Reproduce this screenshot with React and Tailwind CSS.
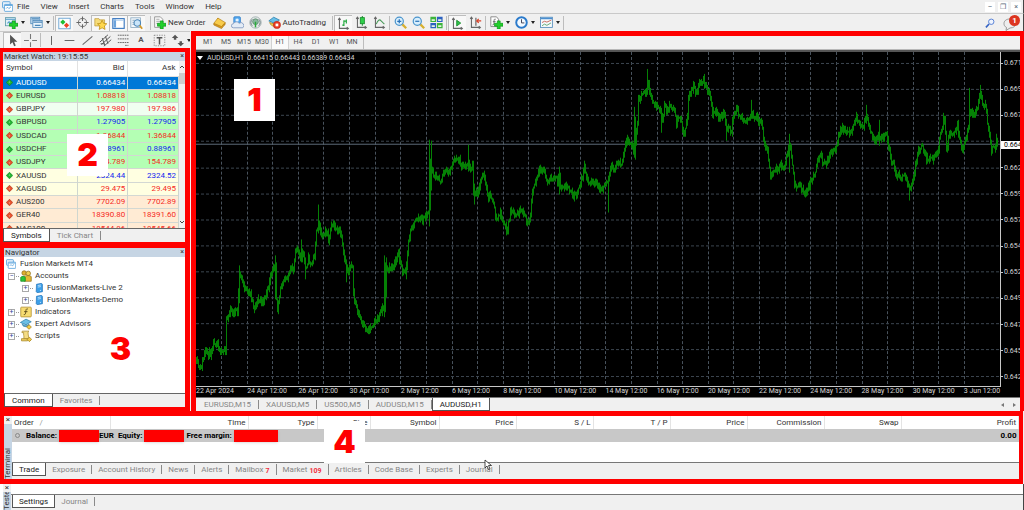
import clsx from 'clsx'

const QUOTES = [
  { symbol: 'AUDUSD', bid: '0.66434', ask: '0.66434', dir: 'up', tone: 'selected' },
  { symbol: 'EURUSD', bid: '1.08818', ask: '1.08818', dir: 'down', tone: 'green' },
  { symbol: 'GBPJPY', bid: '197.980', ask: '197.986', dir: 'down', tone: 'mint' },
  { symbol: 'GBPUSD', bid: '1.27905', ask: '1.27905', dir: 'up', tone: 'green' },
  { symbol: 'USDCAD', bid: '1.36844', ask: '1.36844', dir: 'down', tone: 'green' },
  { symbol: 'USDCHF', bid: '0.88961', ask: '0.88961', dir: 'up', tone: 'green' },
  { symbol: 'USDJPY', bid: '154.789', ask: '154.789', dir: 'down', tone: 'green' },
  { symbol: 'XAUUSD', bid: '2324.44', ask: '2324.52', dir: 'up', tone: 'yellow' },
  { symbol: 'XAGUSD', bid: '29.475', ask: '29.495', dir: 'down', tone: 'yellow' },
  { symbol: 'AUS200', bid: '7702.09', ask: '7702.89', dir: 'down', tone: 'orange' },
  { symbol: 'GER40', bid: '18390.80', ask: '18391.60', dir: 'down', tone: 'orange' },
  { symbol: 'NAS100', bid: '18544.86', ask: '18545.66', dir: 'down', tone: 'orange' },
]

const TONES = {
  selected: 'bg-[#0078d7]',
  green: 'bg-[#b4ffb4]',
  mint: 'bg-[#f0fff0]',
  yellow: 'bg-[#ffffe1]',
  orange: 'bg-[#ffebd4]',
}

const DATES = [
  '22 Apr 2024', '24 Apr 12:00', '26 Apr 12:00', '30 Apr 12:00', '2 May 12:00', '6 May 12:00',
  '8 May 12:00', '10 May 12:00', '14 May 12:00', '16 May 12:00', '20 May 12:00', '22 May 12:00',
  '24 May 12:00', '28 May 12:00', '30 May 12:00', '3 Jun 12:00',
]

const PRICES = [
  '0.671', '0.669', '0.667', '0.664', '0.662', '0.659', '0.657',
  '0.654', '0.652', '0.649', '0.647', '0.645', '0.642',
]

// turning points of the price line, x then y
const TURNS = [
  [196, 363], [200, 370], [205, 352], [210, 354], [214, 341], [217, 344], [221, 355], [225, 349],
  [226, 318], [228, 316], [230, 312], [237, 312], [239, 274], [242, 281], [245, 291], [250, 294],
  [254, 308], [257, 301], [262, 302], [267, 292], [269, 283], [272, 270], [275, 264], [276, 298],
  [277, 308], [280, 287], [285, 280], [290, 272], [293, 269], [295, 249], [297, 247], [300, 261],
  [302, 252], [305, 268], [308, 259], [311, 264], [314, 255], [316, 233], [319, 225], [322, 236],
  [325, 228], [328, 240], [332, 225], [337, 230], [340, 232], [342, 247], [344, 260], [347, 272],
  [351, 263], [352, 268], [353, 295], [356, 308], [359, 317], [363, 328], [368, 331], [373, 322],
  [377, 320], [382, 307], [384, 312], [385, 263], [387, 273], [390, 268], [395, 262], [398, 253],
  [402, 272], [406, 267], [408, 243], [411, 227], [417, 218], [422, 220], [429, 211], [430, 160],
  [432, 173], [435, 177], [440, 180], [445, 170], [448, 173], [452, 163], [456, 157], [462, 165],
  [467, 165], [472, 167], [473, 192], [477, 195], [479, 187], [482, 172], [485, 183], [487, 197],
  [491, 195], [493, 205], [496, 220], [500, 213], [503, 225], [507, 229], [510, 213], [515, 215],
  [519, 213], [523, 212], [526, 222], [530, 217], [532, 192], [535, 183], [538, 173], [543, 169],
  [547, 183], [552, 178], [557, 180], [559, 173], [560, 187], [565, 185], [570, 190], [572, 197],
  [577, 193], [580, 183], [584, 167], [588, 183], [595, 182], [600, 190], [605, 183], [608, 178],
  [611, 165], [614, 170], [617, 164], [622, 164], [624, 145], [627, 142], [632, 145], [634, 150],
  [637, 123], [638, 100], [642, 93], [645, 93], [648, 82], [649, 93], [652, 100], [655, 103],
  [659, 110], [662, 122], [664, 107], [669, 108], [673, 107], [676, 122], [680, 115], [682, 131],
  [684, 135], [687, 117], [688, 98], [693, 87], [696, 92], [699, 82], [703, 80], [708, 92],
  [711, 103], [712, 114], [715, 110], [719, 118], [724, 115], [727, 130], [731, 130], [733, 115],
  [737, 110], [742, 120], [747, 120], [752, 115], [757, 118], [761, 123], [763, 138], [767, 153],
  [770, 175], [775, 170], [780, 165], [784, 167], [787, 150], [789, 145], [792, 163], [794, 187],
  [799, 185], [804, 195], [807, 188], [812, 177], [815, 172], [818, 155], [825, 162], [830, 153],
  [835, 150], [838, 138], [841, 129], [847, 130], [851, 132], [856, 115], [860, 128], [863, 125],
  [866, 115], [868, 123], [872, 137], [877, 138], [882, 138], [886, 132], [888, 150], [892, 162],
  [895, 173], [900, 178], [905, 178], [909, 192], [912, 183], [914, 173], [917, 153], [921, 145],
  [924, 153], [928, 158], [933, 157], [937, 153], [940, 133], [944, 119], [946, 147], [949, 137],
  [953, 133], [957, 125], [960, 142], [963, 150], [967, 133], [970, 108], [973, 117], [977, 105],
  [980, 92], [982, 105], [985, 103], [987, 122], [989, 133], [991, 150], [995, 147], [996, 140],
  [998, 147],
]

// single long bars: x, high, low
const SPIKES = [
  [239, 266, 304], [275, 256, 300], [318, 205, 232], [346, 262, 283], [301, 240, 262], [305, 258, 280],
  [384, 256, 318], [386, 258, 298], [406, 262, 280], [429, 140, 227], [431, 141, 191], [468, 145, 172],
  [474, 184, 205], [506, 222, 236], [559, 167, 195], [608, 176, 213], [634, 107, 158], [635, 117, 160],
  [647, 69, 90], [661, 112, 133], [751, 100, 118], [789, 134, 173], [866, 105, 124], [909, 185, 201],
  [926, 152, 165], [943, 113, 130], [969, 88, 124], [980, 85, 98], [879, 120, 146], [726, 124, 141],
  [996, 134, 150],
]

function buildBars() {
  let seed = 11
  const rand = () => {
    seed = (seed * 16807) % 2147483647
    return seed / 2147483647
  }
  let d = ''
  let prev = TURNS[0][1]
  let i = 0
  for (let x = 196; x <= 997; x++) {
    while (TURNS[i + 1][0] < x) i++
    const [x0, y0] = TURNS[i]
    const [x1, y1] = TURNS[i + 1]
    const mid = y0 + ((y1 - y0) * (x - x0)) / (x1 - x0) + (rand() - 0.5) * 6
    const high = Math.round(Math.min(mid, prev) - rand() * 4)
    const low = Math.round(Math.max(mid, prev) + rand() * 4 + 1)
    d += `M${x + 0.5} ${high}V${low}`
    prev = mid
  }
  SPIKES.forEach(([x, high, low]) => {
    d += `M${x + 0.5} ${high}V${low}`
  })
  return d
}

const BARS = buildBars()
const COLS = Array.from({ length: 30 }, (_, i) => Math.round(221 + i * 25.62))
const ROWS = Array.from({ length: 13 }, (_, i) => Math.round(63 + i * 26.13))

// ── icons ────────────────────────────────────────────────────────────
function Svg({ children, className = 'size-[13px]' }) {
  return (
    <svg viewBox="0 0 16 16" fill="none" className={clsx('shrink-0', className)} aria-hidden="true">
      {children}
    </svg>
  )
}

const Plus = () => (
  <path d="M9 6h3.500v3H16v3.500h-3.500V16H9v-3.500H5.500V9H9z" fill="#22d02c" stroke="#069212" strokeWidth=".8" />
)

const Axes = () => (
  <path d="M3 1.500V14h11M1.500 3.500L3 1.500l1.500 2M12 12.500l2 1.500-2 1.500" stroke="#666" strokeWidth="1.300" />
)

const icons = {
  app: (
    <>
      <rect x=".8" y="1" width="11" height="9" rx="1" fill="#e6f2fc" stroke="#4a9ad8" strokeWidth="1.200" />
      <rect x="3.500" y="5" width="12" height="10" rx="1" fill="#fff" stroke="#4a9ad8" strokeWidth="1.200" />
      <path d="M4 6.500h11M6 11l2-2 2 2 3-2.500" stroke="#4a9ad8" strokeWidth="1.200" />
    </>
  ),
  newChart: (
    <>
      <rect x=".7" y="2" width="12" height="10" fill="#e0f0f6" stroke="#5a98a8" />
      <path d="M1 4h11.500M3 9l2-2 2 2 3-3" stroke="#4a98c8" strokeWidth="1.300" />
      <Plus />
    </>
  ),
  profiles: (
    <>
      <rect x="1" y="1.500" width="11" height="8" fill="#cfe5f7" stroke="#4a86b8" />
      <rect x="3.500" y="5.500" width="11.500" height="8.500" fill="#e8f3fc" stroke="#4a86b8" />
      <path d="M4 7.500h11M6 11.500h7M2 3.500h9" stroke="#4a86b8" strokeWidth="1.500" />
    </>
  ),
  market: (
    <>
      <rect x="1" y="1.500" width="14" height="13" fill="#fdfdff" stroke="#5a9ace" />
      <path d="M6 3l3.200 3.200L6 9.400 2.800 6.200z" fill="#1fbf35" />
      <path d="M10.500 7l3.200 3.200-3.200 3.200-3.200-3.200z" fill="#ee4325" />
    </>
  ),
  target: (
    <>
      <circle cx="8" cy="8" r="5" stroke="#777" strokeWidth="1.200" />
      <path d="M8 .5V6M8 10v5.500M.5 8H6M10 8h5.500" stroke="#666" strokeWidth="1.300" />
    </>
  ),
  star: (
    <>
      <path d="M1 2h5l1 1.500h6V11H1z" fill="#f6dc7a" stroke="#b8922a" strokeWidth=".8" />
      <path d="M10 4l1.800 3.800 4 .5-3 2.800.8 4.200-3.600-2-3.600 2 .8-4.200-3-2.800 4-.5z" fill="#ffd84d" stroke="#b98a10" strokeWidth=".9" />
    </>
  ),
  terminal: (
    <>
      <rect x="1" y="2" width="14" height="12" fill="#fff" stroke="#3a78c0" strokeWidth="1.400" />
      <rect x="2" y="3" width="3" height="10" fill="#6ba3dc" />
      <path d="M2 4h12" stroke="#9dc4ea" />
    </>
  ),
  tester: (
    <>
      <rect x="1" y="1" width="12" height="12" fill="#f3f8fc" stroke="#8aa9c0" />
      <path d="M3 4h3M3 6.500h2M3 9h2" stroke="#7a98b0" />
      <circle cx="9" cy="7.500" r="4" fill="#bfe0f8" fillOpacity=".8" stroke="#4a86b8" strokeWidth="1.300" />
      <path d="M12 10.500l3 4" stroke="#d29a2a" strokeWidth="2.200" />
    </>
  ),
  order: (
    <>
      <path d="M2 1h7l3 3v10H2z" fill="#fbfbfb" stroke="#888" />
      <path d="M4 4h4M4 6.500h5M4 9h3" stroke="#999" />
      <Plus />
    </>
  ),
  gold: (
    <>
      <path d="M6 2.500L5 6l9.500 5M1 9v2l9.500 4.500 4.500-5.500V8" fill="#dc9d20" stroke="#a87410" strokeWidth=".8" />
      <path d="M6 2.500l9 5.500-4.500 5L1 9z" fill="#f8cc4c" stroke="#b07c12" strokeWidth=".8" />
    </>
  ),
  cloud: (
    <>
      <rect x="3.500" y="1" width="8" height="8" rx="1" fill="#5aacf0" stroke="#2a7ac8" />
      <circle cx="7.500" cy="5" r="2" fill="#e6f4ff" />
      <path d="M3 14.500a2.500 2.500 0 010-5 4 4 0 017-.5 3 3 0 014.500 5.500z" fill="#e4ecf6" stroke="#7a94bc" />
    </>
  ),
  signal: (
    <>
      <circle cx="8" cy="8" r="7" fill="#e4e8e8" stroke="#9aa" />
      <path d="M4 12a5.500 5.500 0 010-8M12 12a5.500 5.500 0 000-8" stroke="#6a7a80" strokeWidth="1.200" />
      <circle cx="8" cy="7" r="3.500" fill="#8ab8a0" stroke="#5a8a6a" />
      <path d="M8 7v7" stroke="#2aaa3a" strokeWidth="1.800" />
    </>
  ),
  auto: (
    <>
      <path d="M1 6l6-4.500L14 5l-6 4z" fill="#6ac0e8" stroke="#2a80b0" />
      <path d="M2 8c2 6 9 6 10 0l-4 2z" fill="#f5cd50" stroke="#b08a20" />
      <circle cx="11" cy="11" r="4.500" fill="#e83a22" stroke="#b02010" strokeWidth=".6" />
      <rect x="9.300" y="9.300" width="3.400" height="3.400" fill="#fff" />
    </>
  ),
  bars: (
    <>
      <Axes />
      <path d="M8.500 4v7M6.500 10h2M8.500 5h3M11.500 3v5" stroke="#1ea83a" strokeWidth="1.400" />
    </>
  ),
  candles: (
    <>
      <Axes />
      <path d="M9 0v12" stroke="#168a2a" strokeWidth="1.200" />
      <rect x="6.500" y="2" width="5" height="7.500" fill="#2fd04a" stroke="#168a2a" />
    </>
  ),
  line: (
    <>
      <Axes />
      <path d="M4 10C6 5 8 3.500 10 6l4 4" stroke="#4a9a5a" strokeWidth="1.300" />
    </>
  ),
  zoomIn: (
    <>
      <path d="M10 10l5 5" stroke="#d8b030" strokeWidth="2.800" />
      <circle cx="6.500" cy="6.500" r="5" fill="#d8effd" stroke="#4a94cc" strokeWidth="1.500" />
      <path d="M4 6.500h5M6.500 4v5" stroke="#2a72b8" strokeWidth="1.500" />
    </>
  ),
  zoomOut: (
    <>
      <path d="M10 10l5 5" stroke="#d8b030" strokeWidth="2.800" />
      <circle cx="6.500" cy="6.500" r="5" fill="#d8effd" stroke="#4a94cc" strokeWidth="1.500" />
      <path d="M4 6.500h5" stroke="#2a72b8" strokeWidth="1.500" />
    </>
  ),
  tile: (
    <>
      <path d="M.5 1h7v6.500h-7zM8.500 8.500h7V15h-7z" fill="#3cb43c" />
      <path d="M8.500 1h7v6.500h-7zM.5 8.500h7V15h-7z" fill="#2d62c0" />
      <path d="M2 4h4v2H2zM10 4h4v2h-4zM2 11.500h4v2H2zM10 11.500h4v2h-4z" fill="#e4f4e0" />
    </>
  ),
  scroll: (
    <>
      <Axes />
      <path d="M7 4l5 3.500L7 11z" fill="#2fc24a" stroke="#168a2a" />
    </>
  ),
  shift: (
    <>
      <Axes />
      <path d="M8.500 2v10" stroke="#555" strokeWidth="1.300" />
      <path d="M15 6h-5M12 3.500L9.500 6 12 8.500" stroke="#d8432a" strokeWidth="1.500" />
    </>
  ),
  indicator: (
    <>
      <path d="M1 1h7l2.500 3v9H1z" fill="#fff" stroke="#777" />
      <path d="M7 4c-2-1-2 1-2 3s0 4-2 4M3.500 7H7" stroke="#555" />
      <Plus />
    </>
  ),
  clock: (
    <>
      <circle cx="8" cy="8" r="6.500" fill="#f2f9ff" stroke="#2a7acb" strokeWidth="2.400" />
      <path d="M8 4v4.500h3.500" stroke="#445" strokeWidth="1.200" />
    </>
  ),
  template: (
    <>
      <rect x=".7" y="1.500" width="14.500" height="12.500" fill="#f5fafd" stroke="#4a86b8" />
      <path d="M1 3h14" stroke="#4a8ed0" strokeWidth="2" />
      <path d="M2.500 8l3-1.500 3 1L14 5" stroke="#c05040" />
      <path d="M2.500 12l3-2 3 1.500 5-3" stroke="#4a9a5a" />
    </>
  ),
  pointer: <path d="M5 1v12l3-3 2 5 2-1-2-4.500h4z" fill="#555" />,
  cross: <path d="M8 0v6M8 10v6M0 8h6M10 8h6" stroke="#777" strokeWidth="1.300" />,
  vline: <path d="M8 2.500v11" stroke="#666" strokeWidth="1.300" />,
  hline: <path d="M2 8h12" stroke="#666" strokeWidth="1.300" />,
  trend: <path d="M2 13L14 3" stroke="#666" strokeWidth="1.300" />,
  channel: (
    <path d="M1 10L11 1M3 13L14 3M6 15l9-8M4 5l3 9M8 3l3 9M2 12h5" stroke="#555" strokeWidth="1.200" />
  ),
  fibo: (
    <path d="M1 1.500h14M1 6h14M1 10.500h14M10 14h4" stroke="#666" strokeWidth="1.200" strokeDasharray="2 .8" />
  ),
  label: (
    <>
      <rect x="1.500" y="1.500" width="13" height="13" stroke="#777" strokeDasharray="1.500 1.500" />
      <path d="M4.500 4.500h7M8 4.500V13" stroke="#555" strokeWidth="1.800" />
    </>
  ),
  arrows: (
    <path d="M1 5l4-4 4 4H6.500v2h-3V5zM8 11h2.500V9h3v2H16l-4 4z" fill="#555" />
  ),
  search: (
    <>
      <path d="M6.500 9.500L1.500 15" stroke="#3563c4" strokeWidth="2.600" />
      <circle cx="10" cy="6" r="4.300" fill="#eef4ff" stroke="#5b84d6" strokeWidth="1.600" />
    </>
  ),
  chat: (
    <path d="M7 4c4 0 6 2 6 4.500s-2.500 4.500-6 4.500L3 15.500l.5-3C1.500 11.500 1 10 1 8.500 1 6 3 4 7 4z" fill="#eee" stroke="#999" />
  ),
  accounts: (
    <>
      <circle cx="5.500" cy="4" r="3" fill="#e0b030" stroke="#94701a" />
      <circle cx="11" cy="4.500" r="3" fill="#f2cf50" stroke="#94701a" />
      <path d="M6 15V9c0-2 9-2 9 0v6z" fill="#e6b832" stroke="#94701a" />
      <path d="M1 15v-5c0-2 6-2 6 0v5z" fill="#2fc43a" stroke="#128a1c" />
    </>
  ),
  server: (
    <>
      <path d="M4 2l8-1.500 1.500 1.500v12L5 15.500 3.500 14z" fill="#3c9fe8" stroke="#1a6ab0" />
      <path d="M6 4l5-.8M6 6.500l5-.8" stroke="#d5ecff" strokeWidth="1.200" />
      <path d="M9.500 12l1.500-.2" stroke="#d5ecff" strokeWidth="1.500" />
    </>
  ),
  fx: (
    <>
      <rect x="1" y="1.500" width="14" height="13" rx="1" fill="#f7dc72" stroke="#ac8a28" />
      <path d="M10.500 4c-3-1-2.500 2-2.800 4s-.4 4-2.700 3.500M5.500 7.500h4.500" stroke="#5a4a18" strokeWidth="1.200" />
    </>
  ),
  expert: (
    <>
      <path d="M3 8.500c1 4 8 4 9 0L8 10.500z" fill="#58a8d0" stroke="#2a7ea8" />
      <path d="M.5 6L8 1.500 15 5 8 9z" fill="#6cbfe6" stroke="#2a7ea8" />
      <path d="M12 9l3.200 3-3.200 3-3.200-3z" fill="#f0ca48" stroke="#a88418" />
    </>
  ),
  script: (
    <>
      <path d="M3 1.500h9c-2 1-1 3-1 5l1 5H5c1-3-1-6 0-8H2.500z" fill="#f4dc84" stroke="#a88a30" />
      <path d="M2 11.500h8v3H2z" fill="#eacb5c" stroke="#a88a30" />
      <path d="M12.500 9.500l3 3-3 3-3-3z" fill="#f0ca48" stroke="#a88418" />
    </>
  ),
}

function Caret() {
  return <span className="border-x-2 border-t-[3px] border-x-transparent border-t-[#222]" />
}

function Tool({ icon, label, pressed, menu, children }) {
  return (
    <button
      type="button"
      aria-label={label}
      aria-pressed={pressed}
      className={clsx(
        'flex h-4 shrink-0 items-center',
        menu ? 'w-[25px] gap-[3px] pl-[3px]' : children ? 'gap-[2px] px-px' : 'w-[18px] justify-center',
        pressed && 'border-t border-l border-[#bdbdbd] bg-[#f8f8f8]',
      )}
    >
      <Svg>{icons[icon]}</Svg>
      {children}
      {menu && <Caret />}
    </button>
  )
}

function Sep() {
  return <span className="mx-px h-[14px] w-px shrink-0 bg-[#bdbdbd]" />
}

function Sticker({ children, className }) {
  return (
    <div
      className={clsx(
        'absolute z-10 flex h-[42px] w-[41px] items-center justify-center bg-white',
        "font-['Inter'] text-[32px] leading-none font-black text-[#ff0000]",
        className,
      )}
    >
      {children}
    </div>
  )
}

function Tabs({ items, compact, className }) {
  return (
    <div role="tablist" className={clsx('flex items-center bg-[#f0f0f0]', className)}>
      {items.map(({ name, active, badge }) => (
        <button
          key={name}
          type="button"
          role="tab"
          aria-selected={!!active}
          className={clsx(
            'flex items-center leading-[9px] whitespace-nowrap',
            compact ? 'px-[6px]' : 'px-[7px]',
            active
              ? 'h-full border-r border-b border-l border-[#555] bg-white text-[#222]'
              : 'border-r border-[#8a8a8a] text-[#868686]',
          )}
        >
          {name}
          {badge && <span className="pt-1 pl-0.5 text-[7px] leading-[7px] font-bold text-[#f03040]">{badge}</span>}
        </button>
      ))}
    </div>
  )
}

function PanelTitle({ children }) {
  return (
    <header className="flex h-[9px] shrink-0 items-center justify-between bg-[#c6d5e4] px-px leading-[9px]">
      <h2>{children}</h2>
      <button type="button" aria-label="Close panel" className="text-[7px] leading-[7px]">×</button>
    </header>
  )
}

function MarketWatch() {
  return (
    <section className="relative flex h-[194px] shrink-0 flex-col border-t-4 border-r-[5px] border-l-[3px] border-[#ff0000] bg-white">
      <PanelTitle>Market Watch: 19:15:55</PanelTitle>
      <div className="flex min-h-0 flex-1">
        <div className="min-w-0 flex-1 overflow-hidden">
          <table className="h-[175px] w-full table-fixed border-collapse leading-[10px]">
            <thead>
              <tr className="h-[15px] border-b border-[#e0e0e0]">
                <th scope="col" className="h-[15px] w-[74px] border-r border-[#e2e2e2] pl-[3px] text-left font-normal">Symbol</th>
                <th scope="col" className="border-r border-[#e2e2e2] pr-[3px] text-right font-normal">Bid</th>
                <th scope="col" className="pr-[3px] text-right font-normal">Ask</th>
              </tr>
            </thead>
            <tbody>
              {QUOTES.map((q) => {
                const price = clsx(
                  'border-r border-[#cfd6cf] pr-[2px] text-right',
                  q.tone === 'selected' ? 'text-white' : q.dir === 'up' ? 'text-[#1428f0]' : 'text-[#f52a1e]',
                )
                return (
                  <tr key={q.symbol} className={clsx('border-b border-[#d3d8d3]', TONES[q.tone])}>
                    <td className="border-r border-[#cfd6cf] pl-[3px]">
                      <span className={clsx('flex items-center gap-[3px]', q.tone === 'selected' && 'text-white')}>
                        <svg viewBox="0 0 8 8" className="size-[7px]" aria-hidden="true">
                          <path
                            d="M4 .3L7.700 4 4 7.700.3 4z"
                            fill={q.dir === 'up' ? '#23b531' : '#e8502c'}
                            stroke={q.dir === 'up' ? '#0b7d1c' : '#a82c10'}
                            strokeWidth=".7"
                          />
                          <path d={q.dir === 'up' ? 'M4 2.500l1 1.500H3z' : 'M4 5.500L3 4h2z'} fill="#fff" fillOpacity=".6" />
                        </svg>
                        {q.symbol}
                      </span>
                    </td>
                    <td className={price}>{q.bid}</td>
                    <td className={price}>{q.ask}</td>
                  </tr>
                )
              })}
            </tbody>
          </table>
        </div>
        <div className="flex w-[6px] flex-col items-center bg-[#f0f0f0] py-1">
          <svg viewBox="0 0 6 4" className="h-1 w-[6px]" aria-hidden="true">
            <path d="M1 3l2-2 2 2" stroke="#444" fill="none" />
          </svg>
          <span className="mt-1 h-[11px] w-full bg-[#cdcdcd]" />
          <span className="flex-1" />
          <svg viewBox="0 0 6 4" className="h-1 w-[6px]" aria-hidden="true">
            <path d="M1 1l2 2 2-2" stroke="#444" fill="none" />
          </svg>
        </div>
      </div>
      <Tabs
        className="h-[14px] shrink-0 border-t border-[#666]"
        items={[{ name: 'Symbols', active: true }, { name: 'Tick Chart' }]}
      />
      <Sticker className="top-[82px] left-[64px]">2</Sticker>
    </section>
  )
}

function TreeRow({ icon, label, open, nested }) {
  return (
    <li className={clsx('flex h-3 items-center gap-px', nested ? 'pl-[18px]' : 'pl-1')}>
      <button
        type="button"
        aria-label={`Toggle ${label}`}
        className="flex size-[7px] items-center justify-center border border-[#a9a9a9] bg-white text-[7px] leading-[5px] text-[#3a4a9a]"
      >
        {open ? '−' : '+'}
      </button>
      <span className="w-[3px] border-t border-dotted border-[#999]" />
      <span className="flex items-center gap-[3px]">
        <Svg className={nested ? 'size-[10px]' : 'size-[12px]'}>{icons[icon]}</Svg>
        {label}
      </span>
    </li>
  )
}

function Navigator() {
  return (
    <section className="relative flex flex-1 flex-col border-t-[6px] border-r-[5px] border-b-4 border-l-4 border-[#ff0000] bg-white">
      <PanelTitle>Navigator</PanelTitle>
      <ul className="flex-1 pt-px">
        <li className="flex h-3 items-center gap-1 pl-[2px]">
          <Svg className="size-[10px]">{icons.app}</Svg>
          Fusion Markets MT4
        </li>
        <TreeRow icon="accounts" label="Accounts" open />
        <TreeRow icon="server" label="FusionMarkets-Live 2" nested />
        <TreeRow icon="server" label="FusionMarkets-Demo" nested />
        <TreeRow icon="fx" label="Indicators" />
        <TreeRow icon="expert" label="Expert Advisors" />
        <TreeRow icon="script" label="Scripts" />
      </ul>
      <Tabs
        className="h-[14px] shrink-0 border-t border-[#666]"
        items={[{ name: 'Common', active: true }, { name: 'Favorites' }]}
      />
      <Sticker className="top-[80px] left-[96px]">3</Sticker>
    </section>
  )
}

function Chart() {
  return (
    <section className="relative flex min-w-0 flex-1 flex-col border-t-[5px] border-r-4 border-l-[5px] border-[#ff0000] bg-[#f0f0f0]">
      <div className="flex h-[13px] shrink-0 items-center pl-[3px] text-[7px] leading-[9px] text-[#555]">
        {['M1', 'M5', 'M15', 'M30', 'H1', 'H4', 'D1', 'W1', 'MN'].map((tf) => (
          <button
            key={tf}
            type="button"
            className={clsx('h-full w-[18px] text-center', tf === 'H1' && 'border-x border-[#d2d2d2] bg-[#fafafa]')}
          >
            {tf}
          </button>
        ))}
        <span className="ml-[2px] h-full w-px bg-[#bdbdbd]" />
      </div>
      <div className="h-[3px] shrink-0 border-t border-[#b8b8b8] bg-[#555]" />

      <div className="flex min-h-0 flex-1 bg-black text-[7px] leading-[8px] text-[#d6d6d6]">
        <div className="relative min-w-0 flex-1 border-b border-[#c8c8c8]">
          <svg viewBox="196 52 804 335" preserveAspectRatio="none" className="absolute inset-0 size-full" role="img" aria-label="AUDUSD hourly price chart">
            {COLS.map((x) => (
              <path key={x} d={`M${x + 0.5} 52V387`} stroke="#48525c" strokeDasharray="3 2" />
            ))}
            {ROWS.map((y) => (
              <path key={y} d={`M196 ${y + 0.5}H1000`} stroke="#3c4650" strokeDasharray="3 2" />
            ))}
            <path d="M196 144.500H1000" stroke="#5c6a78" />
            <path d={BARS} stroke="#058205" fill="none" />
          </svg>
          <p className="relative flex items-center gap-1 pt-[2px] pl-px">
            <span className="border-x-[3px] border-t-4 border-x-transparent border-t-white" />
            <span className="whitespace-pre">AUDUSD,H1  0.66415 0.66443 0.66389 0.66434</span>
          </p>
        </div>
        <div className="relative flex w-5 shrink-0 flex-col justify-between overflow-hidden border-l border-[#c8c8c8] pt-[7px] pb-[6px]">
          {PRICES.map((p) => (
            <span key={p} className={clsx('flex items-center gap-px', p === '0.664' && 'invisible')}>
              <span className="h-px w-[2px] shrink-0 bg-[#c8c8c8]" />
              {p}
            </span>
          ))}
          <span className="absolute top-[89px] left-0 bg-white pl-[3px] text-black">0.664</span>
        </div>
      </div>
      <div className="grid h-[10px] shrink-0 grid-cols-16 bg-black pr-[5px] text-[7px] leading-[8px] whitespace-nowrap text-[#d6d6d6]">
        {DATES.map((d) => (
          <span key={d}>{d}</span>
        ))}
      </div>

      <div className="flex h-[14px] shrink-0 border-t border-[#777]">
        <Tabs
          className="pl-px"
          items={[
            { name: 'EURUSD,M15' },
            { name: 'XAUUSD,M5' },
            { name: 'US500,M5' },
            { name: 'AUDUSD,M15' },
            { name: 'AUDUSD,H1', active: true },
          ]}
        />
        <div className="ml-auto flex items-center gap-[9px] pr-1">
          <button type="button" aria-label="Scroll tabs left" className="border-y-2 border-r-[3px] border-y-transparent border-r-[#777]" />
          <button type="button" aria-label="Scroll tabs right" className="border-y-2 border-l-[3px] border-y-transparent border-l-[#777]" />
        </div>
      </div>
      <Sticker className="top-[43px] left-[38px]">1</Sticker>
    </section>
  )
}

function SideLabel({ children }) {
  return (
    <div className="flex w-2 shrink-0 flex-col items-center justify-between bg-[#c6d5e4]">
      <button type="button" aria-label={`Close ${children}`} className="w-full shrink-0 bg-[#f0f0f0] text-[8px] leading-[8px]">×</button>
      <span className="min-h-0 rotate-180 overflow-hidden leading-[8px] [writing-mode:vertical-rl]">{children}</span>
    </div>
  )
}

function Redacted({ className }) {
  return <span className={clsx('h-3 bg-[#ff0000] shadow-sm', className)} />
}

function Terminal() {
  const columns = [
    ['Time', 'w-[138px]'], ['Type', 'w-[69px]'], ['Size', 'w-[53px]'], ['Symbol', 'w-[69px]'],
    ['Price', 'w-[77px]'], ['S / L', 'w-[77px]'], ['T / P', 'w-[77px]'], ['Price', 'w-[77px]'],
    ['Commission', 'w-[77px]'], ['Swap', 'w-[77px]'], ['Profit', ''],
  ]
  return (
    <section className="relative mr-px flex h-[73px] shrink-0 border-x-4 border-y-[5px] border-[#ff0000] bg-white">
      <SideLabel>Terminal</SideLabel>
      <div className="flex min-w-0 flex-1 flex-col">
        <table className="w-full table-fixed border-collapse text-[#333]">
          <thead>
            <tr className="h-[13px] leading-[10px]">
              <th scope="col" className="w-[98px] border-r border-[#e4e4e4] pl-0.5 text-left font-normal">
                Order <span className="pl-1 text-[#999]">/</span>
              </th>
              {columns.map(([name, width], i) => (
                <th key={i} scope="col" className={clsx('border-r border-[#e4e4e4] pr-[2px] text-right font-normal', width)}>
                  {name}
                </th>
              ))}
            </tr>
          </thead>
          <tbody>
            <tr className="h-[13px] bg-[#c8c8c8] leading-[12px] font-bold text-black">
              <td colSpan={11}>
                <span className="flex items-center pl-[3px]">
                  <span className="mr-[6px] size-[5px] rounded-full border border-[#888]" />
                  Balance:
                  <Redacted className="ml-[2px] w-10" />
                  EUR&nbsp; Equity:
                  <Redacted className="mx-[2px] w-10" />
                  Free margin:
                  <Redacted className="ml-[2px] w-11" />
                </span>
              </td>
              <td className="pr-[2px] text-right">0.00</td>
            </tr>
          </tbody>
        </table>
        <Tabs
          compact
          className="mt-auto h-[17px] border-t border-[#777] pb-[3px]"
          items={[
            { name: 'Trade', active: true },
            { name: 'Exposure' },
            { name: 'Account History' },
            { name: 'News' },
            { name: 'Alerts' },
            { name: 'Mailbox', badge: '7' },
            { name: 'Market', badge: '109' },
            { name: 'Articles' },
            { name: 'Code Base' },
            { name: 'Experts' },
            { name: 'Journal' },
          ]}
        />
      </div>
      <Sticker className="top-[5px] left-[320px]">4</Sticker>
      <svg viewBox="0 0 8 12" className="absolute top-[43px] left-[480px] h-3 w-2" aria-hidden="true">
        <path d="M1 1v8l2-2 1.500 3.500 1.500-.7L4.500 6.500h3z" fill="#fff" stroke="#222" strokeWidth=".8" />
      </svg>
    </section>
  )
}

export default function App() {
  return (
    <div className="flex min-h-screen flex-col overflow-hidden bg-[#f0f0f0] font-['Roboto',sans-serif] text-[8px] text-[#333]">
      <nav className="flex h-[14px] shrink-0 items-center border-r border-b border-r-[#444] border-b-[#c9c9c9] pl-[2px] text-[8px] leading-[10px]">
        <Svg className="size-[11px]">{icons.app}</Svg>
        <div className="flex gap-[11px] pl-1">
          {['File', 'View', 'Insert', 'Charts', 'Tools', 'Window', 'Help'].map((m) => (
            <button key={m} type="button">{m}</button>
          ))}
        </div>
        <div className="ml-auto flex gap-[3px] pr-[2px]">
          {[['Minimize', '–'], ['Restore', '❐'], ['Close', '×']].map(([label, glyph]) => (
            <button key={label} type="button" aria-label={label} className="size-[10px] bg-white text-[7px] leading-[10px] text-[#567]">
              {glyph}
            </button>
          ))}
        </div>
      </nav>

      <div className="flex h-[17px] shrink-0 items-center border-r border-r-[#444] pl-[2px]">
        <Tool icon="newChart" label="New chart" menu />
        <Tool icon="profiles" label="Profiles" menu />
        <Sep />
        <Tool icon="market" label="Market Watch" pressed />
        <Tool icon="target" label="Data Window" />
        <Tool icon="star" label="Navigator" pressed />
        <Tool icon="terminal" label="Terminal" pressed />
        <Tool icon="tester" label="Strategy Tester" pressed />
        <span className="w-1" />
        <Sep />
        <Tool icon="order" label="New Order"><span>New Order</span></Tool>
        <span className="w-1" />
        <Tool icon="gold" label="MetaEditor" />
        <Tool icon="cloud" label="Cloud" />
        <Tool icon="signal" label="Signals" />
        <span className="w-[2px]" />
        <Tool icon="auto" label="AutoTrading"><span>AutoTrading</span></Tool>
        <span className="w-1" />
        <Sep />
        <Tool icon="bars" label="Bar chart" pressed />
        <Tool icon="candles" label="Candlesticks" />
        <Tool icon="line" label="Line chart" />
        <Sep />
        <Tool icon="zoomIn" label="Zoom in" />
        <Tool icon="zoomOut" label="Zoom out" />
        <Tool icon="tile" label="Tile windows" />
        <Sep />
        <Tool icon="scroll" label="Auto scroll" pressed />
        <Tool icon="shift" label="Chart shift" />
        <Sep />
        <Tool icon="indicator" label="Indicators" menu />
        <Tool icon="clock" label="Periods" menu />
        <Tool icon="template" label="Templates" menu />
        <Sep />
        <div className="ml-auto flex items-center gap-2 pr-1">
          <button type="button" aria-label="Search"><Svg className="size-[10px]">{icons.search}</Svg></button>
          <button type="button" aria-label="Messages" className="relative">
            <Svg className="size-[16px]">{icons.chat}</Svg>
            <span className="absolute top-0 -right-px size-[11px] rounded-full bg-[#dc3520] text-center text-[8px] leading-[11px] font-bold text-white">1</span>
          </button>
        </div>
      </div>

      <main className="flex min-h-[380px] flex-1">
        <div className="flex w-[191px] shrink-0 flex-col pr-px">
          <div className="flex h-[17px] shrink-0 items-center overflow-hidden border-t border-[#c9c9c9] pl-[3px]">
            <Tool icon="pointer" label="Cursor" pressed />
            <Tool icon="cross" label="Crosshair" />
            <Sep />
            <Tool icon="vline" label="Vertical line" />
            <Tool icon="hline" label="Horizontal line" />
            <Tool icon="trend" label="Trendline" />
            <Tool icon="channel" label="Channel" />
            <Tool icon="fibo" label="Fibonacci" />
            <button type="button" aria-label="Text" className="w-[18px] shrink-0 font-bold text-[#555]">A</button>
            <Tool icon="label" label="Text label" />
            <Tool icon="arrows" label="Arrows" menu />
          </div>
          <MarketWatch />
          <Navigator />
        </div>
        <Chart />
      </main>

      <Terminal />

      <section className="flex h-[26px] shrink-0 border-r border-[#444] bg-white pl-[3px]">
        <SideLabel>Tester</SideLabel>
        <div className="flex min-w-0 flex-1 flex-col">
          <Tabs
            compact
            className="mt-auto h-4 border-t border-[#777] pb-[2px] pl-px"
            items={[{ name: 'Settings', active: true }, { name: 'Journal' }]}
          />
        </div>
      </section>
    </div>
  )
}
